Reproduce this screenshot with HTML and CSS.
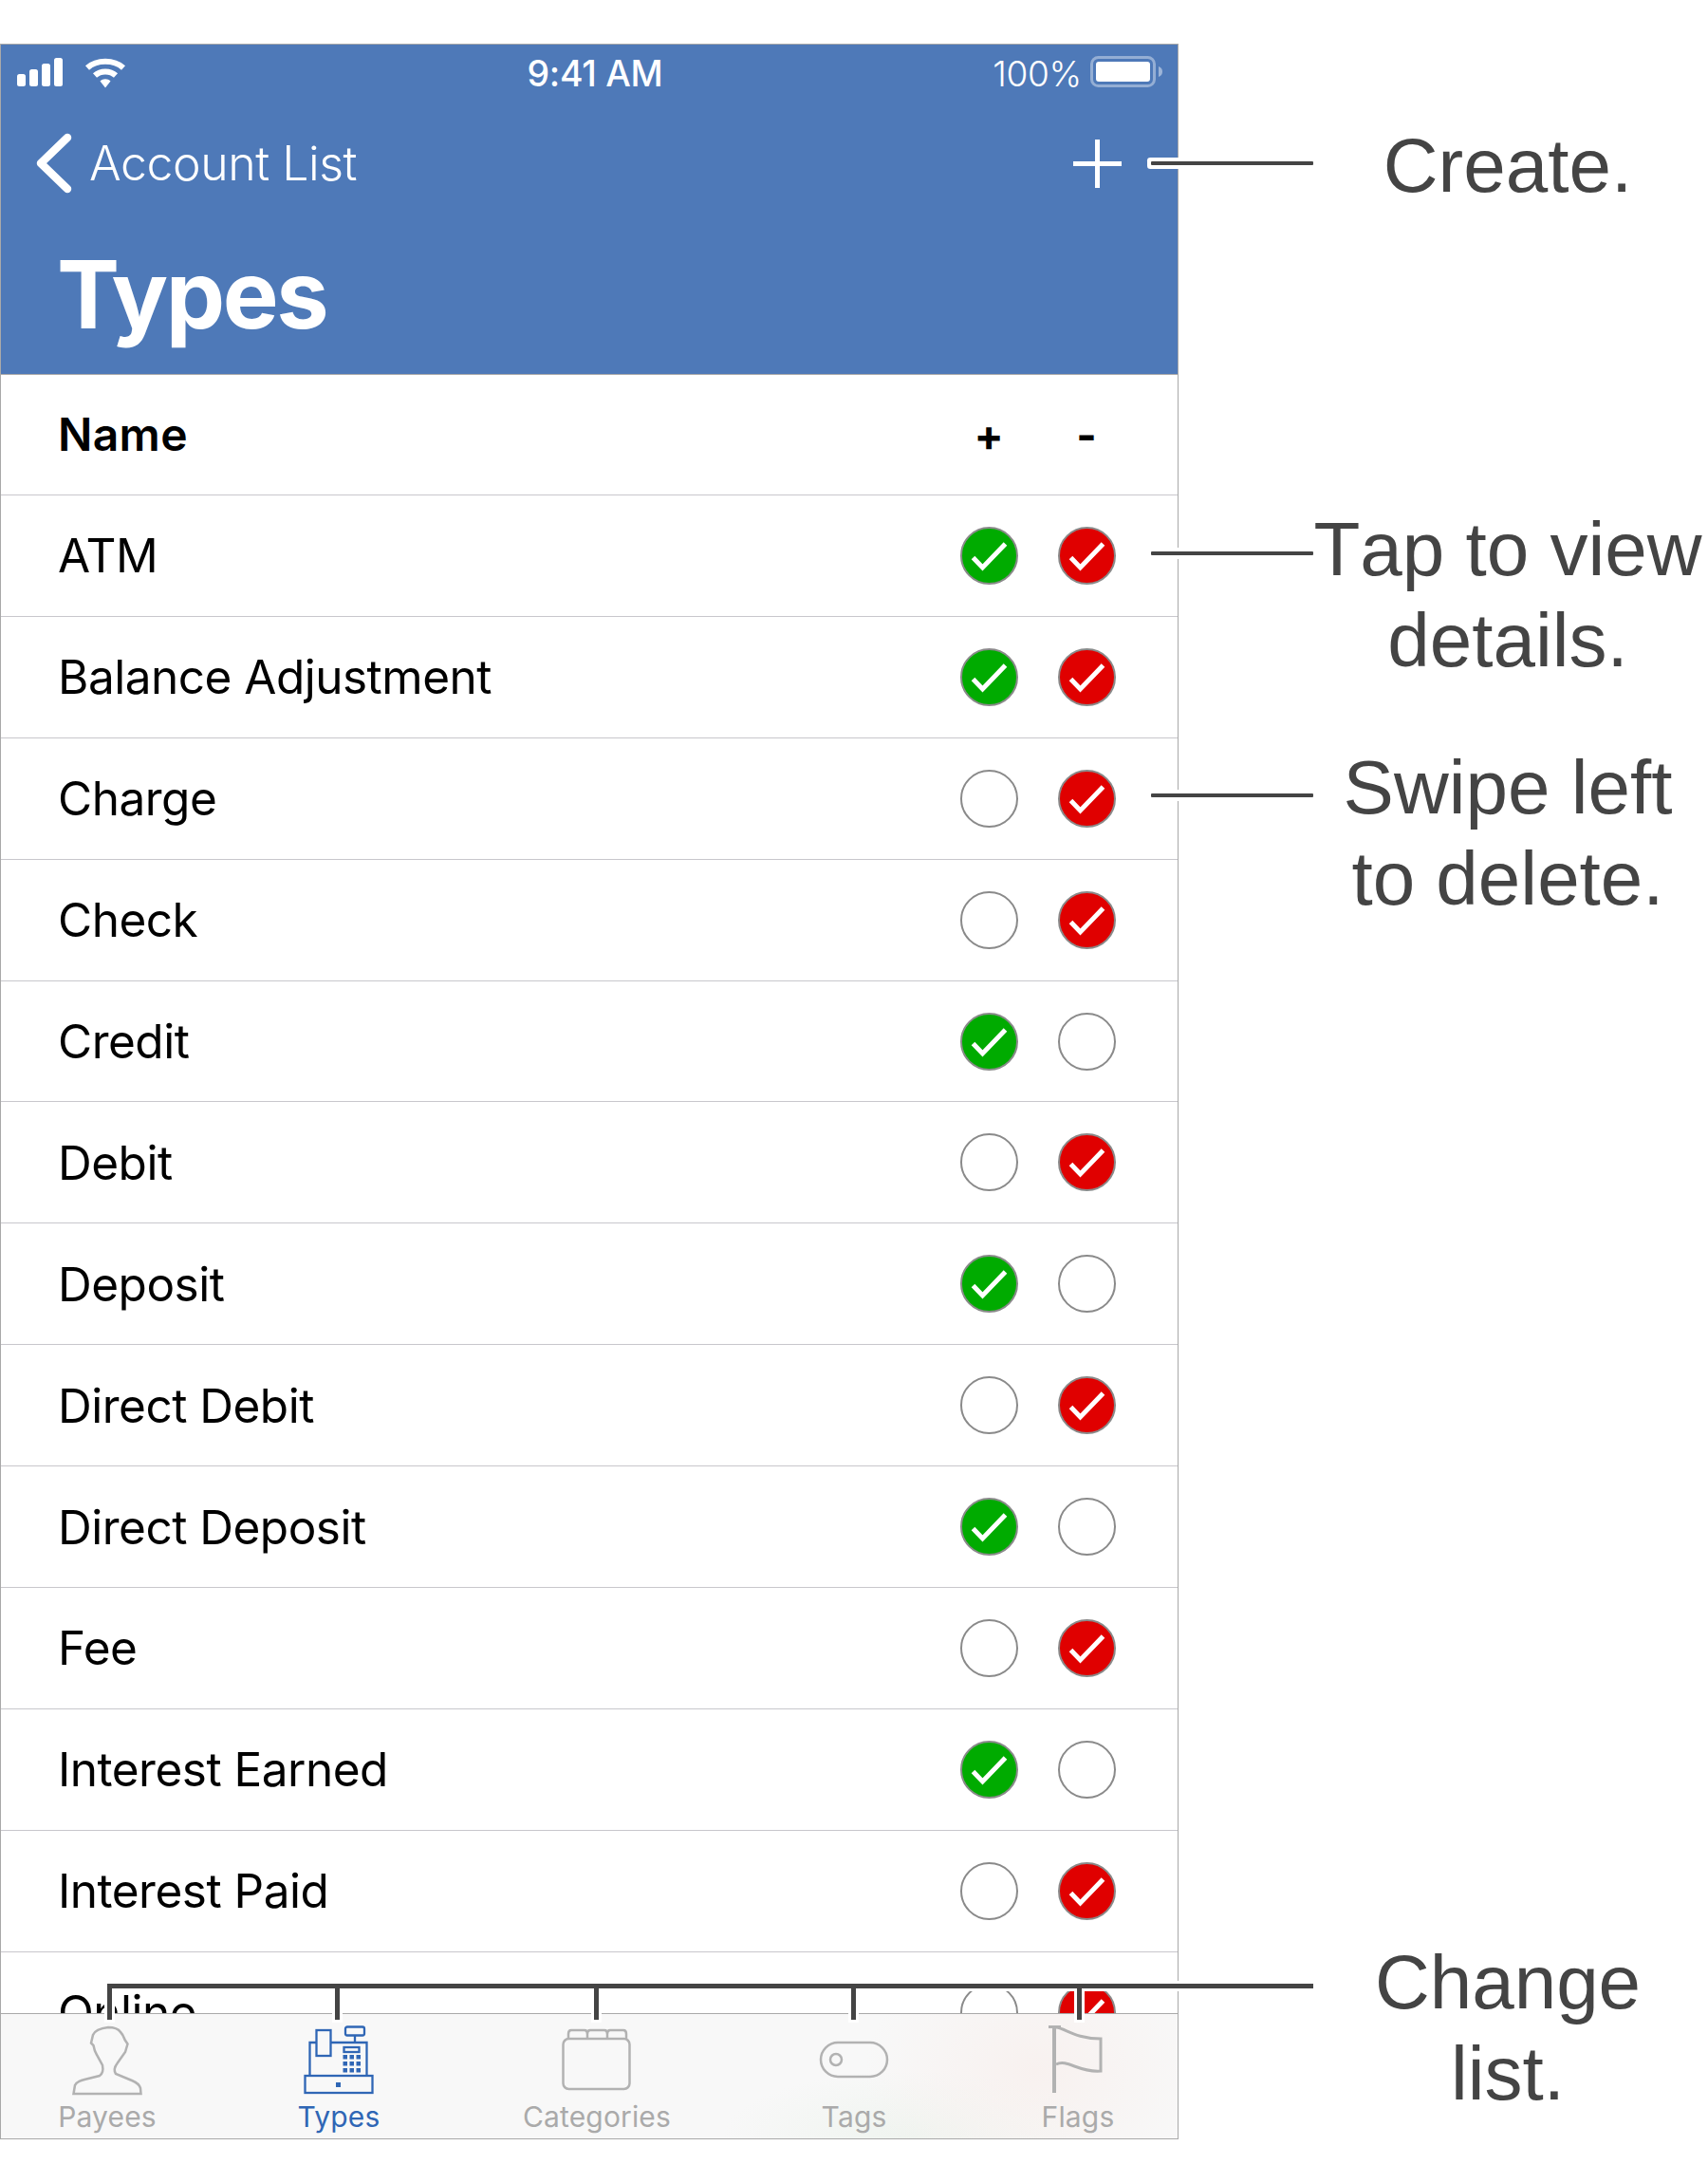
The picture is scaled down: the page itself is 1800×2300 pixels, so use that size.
FILE: index.html
```html
<!DOCTYPE html>
<html lang="en">
<head>
<meta charset="utf-8">
<title>Types</title>
<link rel="stylesheet" href="styles.css">
</head>
<body>
<svg class="defs" width="0" height="0"><symbol id="check" viewBox="0 0 61 61"><path d="M13.500 32.500 23.500 43 47.500 18" fill="none" stroke="#fff" stroke-width="5"/></symbol></svg>
<main class="phone">
  <header class="nav">
    <div class="status">
      <svg class="signal" width="48" height="30" viewBox="0 0 48 30"><rect x="0" y="17" width="9" height="13" rx="2.500"/><rect x="13" y="12" width="9" height="18" rx="2.500"/><rect x="26" y="6" width="9" height="24" rx="2.500"/><rect x="39" y="0" width="9" height="30" rx="2.500"/></svg>
      <svg class="wifi" width="44" height="32" viewBox="0 0 44 32"><path d="M3 10.500C13 1.500 31 1.500 41 10.500" /><path d="M11 18.500C17 13 27 13 33 18.500"/><path class="wedge" d="M16.500 24.500C19.500 21.500 24.500 21.500 27.500 24.500L22 31.500Z"/></svg>
      <span class="time">9:41 AM</span>
      <span class="pct">100%</span>
      <svg class="battery" width="77" height="33" viewBox="0 0 77 33"><rect x="1.500" y="1.500" width="66" height="30" rx="7" fill="none" stroke="#fff" stroke-opacity=".4" stroke-width="3"/><rect x="6" y="6" width="57" height="21" rx="3" fill="#fff"/><path d="M72 11C75 12 76 14 76 16.500S75 21 72 22Z" fill="#fff" fill-opacity=".45"/></svg>
    </div>
    <div class="navbar">
      <svg class="back" width="38" height="64" viewBox="0 0 38 64"><path d="M33 5 5 32 33 59" fill="none" stroke="#fff" stroke-width="8.500" stroke-linecap="round" stroke-linejoin="round"/></svg>
      <span class="back-label">Account List</span>
      <svg class="plus" width="51" height="51" viewBox="0 0 51 51"><path d="M25.500 0V51M0 25.500H51" stroke="#fff" stroke-width="5"/></svg>
    </div>
    <h1 class="title">Types</h1>
  </header>

  <section class="list">
    <div class="row head"><span class="name">Name</span><span class="sign">+</span><span class="sign">-</span></div>
    <div class="row"><span class="name">ATM</span><span class="dot green"><svg><use href="#check"/></svg></span><span class="dot red"><svg><use href="#check"/></svg></span></div>
    <div class="row"><span class="name">Balance Adjustment</span><span class="dot green"><svg><use href="#check"/></svg></span><span class="dot red"><svg><use href="#check"/></svg></span></div>
    <div class="row"><span class="name">Charge</span><span class="dot"></span><span class="dot red"><svg><use href="#check"/></svg></span></div>
    <div class="row"><span class="name">Check</span><span class="dot"></span><span class="dot red"><svg><use href="#check"/></svg></span></div>
    <div class="row"><span class="name">Credit</span><span class="dot green"><svg><use href="#check"/></svg></span><span class="dot"></span></div>
    <div class="row"><span class="name">Debit</span><span class="dot"></span><span class="dot red"><svg><use href="#check"/></svg></span></div>
    <div class="row"><span class="name">Deposit</span><span class="dot green"><svg><use href="#check"/></svg></span><span class="dot"></span></div>
    <div class="row"><span class="name">Direct Debit</span><span class="dot"></span><span class="dot red"><svg><use href="#check"/></svg></span></div>
    <div class="row"><span class="name">Direct Deposit</span><span class="dot green"><svg><use href="#check"/></svg></span><span class="dot"></span></div>
    <div class="row"><span class="name">Fee</span><span class="dot"></span><span class="dot red"><svg><use href="#check"/></svg></span></div>
    <div class="row"><span class="name">Interest Earned</span><span class="dot green"><svg><use href="#check"/></svg></span><span class="dot"></span></div>
    <div class="row"><span class="name">Interest Paid</span><span class="dot"></span><span class="dot red"><svg><use href="#check"/></svg></span></div>
    <div class="row"><span class="name">Online</span><span class="dot"></span><span class="dot red"><svg><use href="#check"/></svg></span></div>
  </section>

  <nav class="tabs">
    <div class="tab">
      <svg class="icon" width="74" height="74" viewBox="0 0 74 74"><path d="M1.500 72 3 63C5 59 9 58 15 56.500L29 53C32 51 33 47 32 42L26 31C24 28 23 24 22.500 21L20 18.500 22 10C24 5 29 3 38 2 44 2 49 4 51 7 54 10 55 14 55.500 15L58.500 19.500 56 28 47.500 40C44.500 44 44 48 46 51L63 58C68 60 71 63 72 66L72.500 72Z" fill="none" stroke="#b2b2b2" stroke-width="2.500"/></svg>
      <span>Payees</span>
    </div>
    <div class="tab on">
      <svg class="icon" width="74" height="74" viewBox="0 0 74 74"><g fill="none" stroke="#2f66b5" stroke-width="2.300"><rect x="1.500" y="53" width="71" height="18"/><path d="M13 18H6.500V53M28 18H66.500V53"/><rect x="13.500" y="5" width="15" height="27"/><rect x="44" y="1.500" width="20" height="9" rx="2"/><path d="M54 10.500V18"/><rect x="42.500" y="23" width="16" height="5"/></g><g fill="#2f66b5"><rect x="41.500" y="31" width="4.500" height="4.500"/><rect x="48.500" y="31" width="4.500" height="4.500"/><rect x="55.500" y="31" width="4.500" height="4.500"/><rect x="41.500" y="38" width="4.500" height="4.500"/><rect x="48.500" y="38" width="4.500" height="4.500"/><rect x="55.500" y="38" width="4.500" height="4.500"/><rect x="41.500" y="45" width="4.500" height="4.500"/><rect x="48.500" y="45" width="4.500" height="4.500"/><rect x="55.500" y="45" width="4.500" height="4.500"/><rect x="34" y="60" width="5" height="5"/></g></svg>
      <span>Types</span>
    </div>
    <div class="tab">
      <svg class="icon" width="74" height="74" viewBox="0 0 74 74"><g fill="none" stroke="#b2b2b2" stroke-width="2.500"><rect x="1.500" y="14" width="70" height="53" rx="6"/><path d="M7 14V9C7 6 8 5 10 5H24C26 5 27 6 27 9V13M27 13V9C27 6 28 5 30 5H45C47 5 48 6 48 9V13M48 13V9C48 6 49 5 51 5H65C67 5 68 6 68 9V14"/></g></svg>
      <span>Categories</span>
    </div>
    <div class="tab">
      <svg class="icon" width="74" height="74" viewBox="0 0 74 74"><g fill="none" stroke="#b2b2b2" stroke-width="2.500"><rect x="2" y="18" width="70" height="36" rx="18"/><circle cx="18" cy="36" r="6"/></g></svg>
      <span>Tags</span>
    </div>
    <div class="tab">
      <svg class="icon" width="74" height="74" viewBox="0 0 74 74"><g fill="none" stroke="#b2b2b2"><path d="M12 0V71M6 1H19" stroke-width="4"/><path d="M14 2C24 3 34 14 61 14V48C38 50 26 35 14 41" stroke-width="3"/></g></svg>
      <span>Flags</span>
    </div>
  </nav>
</main>

<div class="note create">Create.</div>
<div class="note tap">Tap to view<br>details.</div>
<div class="note swipe">Swipe left<br>to delete.</div>
<div class="note change">Change<br>list.</div>

<div class="lead lead-create"></div>
<div class="lead lead-tap"></div>
<div class="lead lead-swipe"></div>
<div class="bus-halo"></div>
<div class="drop d1"></div>
<div class="drop d2"></div>
<div class="drop d3"></div>
<div class="drop d4"></div>
<div class="drop d5"></div>
<div class="bus"></div>
</body>
</html>
```
FILE: styles.css
```css
* { box-sizing: border-box; }
html, body { margin: 0; padding: 0; background: #fff; }
body { position: relative; width: 1800px; height: 2300px; overflow: hidden; font-family: Inter, "Liberation Sans", sans-serif; }
.defs { position: absolute; }

.phone { margin-top: 46px; width: 1242px; height: 2208px; border: 1px solid #a9a9a9; display: flex; flex-direction: column; overflow: hidden; }

.nav { height: 348px; flex: none; background: #4e79b8; color: #fff; border-bottom: 1px solid #a9a9a9; }
.status { height: 83px; padding: 14px 15px 0 17px; display: flex; align-items: flex-start; }
.signal { fill: #fff; flex: none; }
.wifi { flex: none; margin-left: 23px; }
.wifi path { fill: none; stroke: #fff; stroke-width: 6; }
.wifi .wedge { fill: #fff; stroke: none; }
.time { position: absolute; left: 487px; width: 280px; top: 56px; text-align: center; font-size: 37.5px; line-height: 44px; font-weight: 500; letter-spacing: -0.3px; }
.pct { margin-left: auto; font-size: 37px; line-height: 44px; font-weight: 300; margin-top: -5px; letter-spacing: -0.3px; }
.battery { flex: none; margin-left: 9px; margin-top: -2px; }

.navbar { height: 84px; display: flex; align-items: center; padding: 0 59px 0 37px; }
.back { flex: none; }
.back-label { margin-left: 18px; font-size: 50px; font-weight: 300; line-height: 60px; letter-spacing: -0.45px; }
.plus { margin-left: auto; flex: none; }
.title { margin: 42px 0 0 59px; font-size: 99px; line-height: 108px; font-weight: 700; letter-spacing: -2.4px; }

.list { flex: 1; min-height: 0; overflow: hidden; background: #fff; }
.row { height: 127.9px; flex: none; display: flex; align-items: center; padding: 0 65.5px 0 60px; border-bottom: 1px solid #c8c7cc; gap: 42px; }
.row.head { height: 127px; }
.name { flex: 1; font-size: 49.5px; line-height: 60px; color: #000; letter-spacing: -0.5px; }
.head .name { font-weight: 600; font-size: 48px; letter-spacing: 0.3px; }
.sign { width: 61px; text-align: center; font-size: 46px; font-weight: 700; color: #000; }
.dot { width: 61px; height: 61px; flex: none; border-radius: 50%; border: 2px solid #8a8a8a; background: #fff; position: relative; }
.dot svg { position: absolute; left: -2px; top: -2px; width: 61px; height: 61px; display: block; }
.green { background: #00ab00; }
.red { background: #e00000; }

.tabs { height: 132px; flex: none; border-top: 1px solid #a9a9a9; display: grid; grid-template-columns: 224px 264px 280px 262px 210px;
  background:
    radial-gradient(ellipse 180px 130px at 1090px 60px, #f8f1ef, transparent),
    radial-gradient(ellipse 200px 70px at 960px 130px, #eff4ef, transparent),
    #f8f8f8; }
.tab { display: flex; flex-direction: column; align-items: center; padding-top: 12px; font-size: 30px; line-height: 36px; color: #aaa; letter-spacing: 0.15px; }
.tab.on { color: #2f66b5; }
.icon { display: block; flex: none; margin-bottom: 4px; }

.note { position: absolute; left: 1379px; width: 420px; text-align: center; font-family: "Liberation Sans", Arial, sans-serif; font-size: 80px; line-height: 96px; color: #444; font-kerning: none; }
.create { top: 127px; }
.tap { top: 531px; }
.swipe { top: 782px; }
.change { top: 2041px; }

.lead { position: absolute; left: 1213px; width: 171px; height: 4px; background: #444; box-shadow: 0 0 0 4px #fff; border-radius: 1px; }
.lead-create { top: 170px; }
.lead-tap { top: 581px; }
.lead-swipe { top: 836px; }

.bus-halo { position: absolute; left: 110px; top: 2087px; width: 1277px; height: 11px; background: #fff; }
.bus { position: absolute; left: 113px; top: 2090px; width: 1271px; height: 5px; background: #444; }
.drop { position: absolute; top: 2093px; width: 5px; height: 35px; background: #444; box-shadow: 0 0 0 3px #fff; }
.d1 { left: 113px; }
.d2 { left: 353px; }
.d3 { left: 626px; }
.d4 { left: 897px; }
.d5 { left: 1135px; }
```
